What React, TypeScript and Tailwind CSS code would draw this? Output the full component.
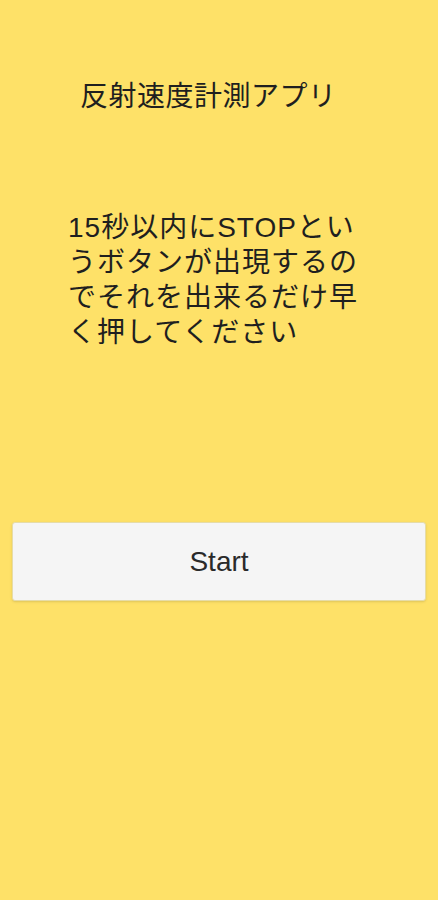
import React from 'react';

const App: React.FC = () => {
  return (
    <div
      className="w-full h-[900px] bg-[#fee168] flex flex-col text-[#1f1f1f]"
      style={{ fontFamily: '"Liberation Sans", "Noto Sans CJK JP", sans-serif' }}
    >
      {/* Title */}
      <h1 className="mt-[80px] pl-[80px] text-[28px] leading-[34px] tracking-[0.5px] font-normal">反射速度計測アプリ</h1>

      {/* Instructions */}
      <p className="mt-[96px] ml-[68px] w-[298px] text-[28px] leading-[35px] tracking-[1px] break-all">
        15秒以内にSTOPというボタンが出現するのでそれを出来るだけ早く押してください
      </p>

      {/* Start button */}
      <div className="mt-[172px] px-[12px]">
        <button className="w-full h-[79px] bg-[#f5f5f5] rounded-[3px] border border-[#e6dca8] shadow-sm text-[28px] text-[#2a2a2a]">
          Start
        </button>
      </div>
    </div>
  );
};

export default App;
